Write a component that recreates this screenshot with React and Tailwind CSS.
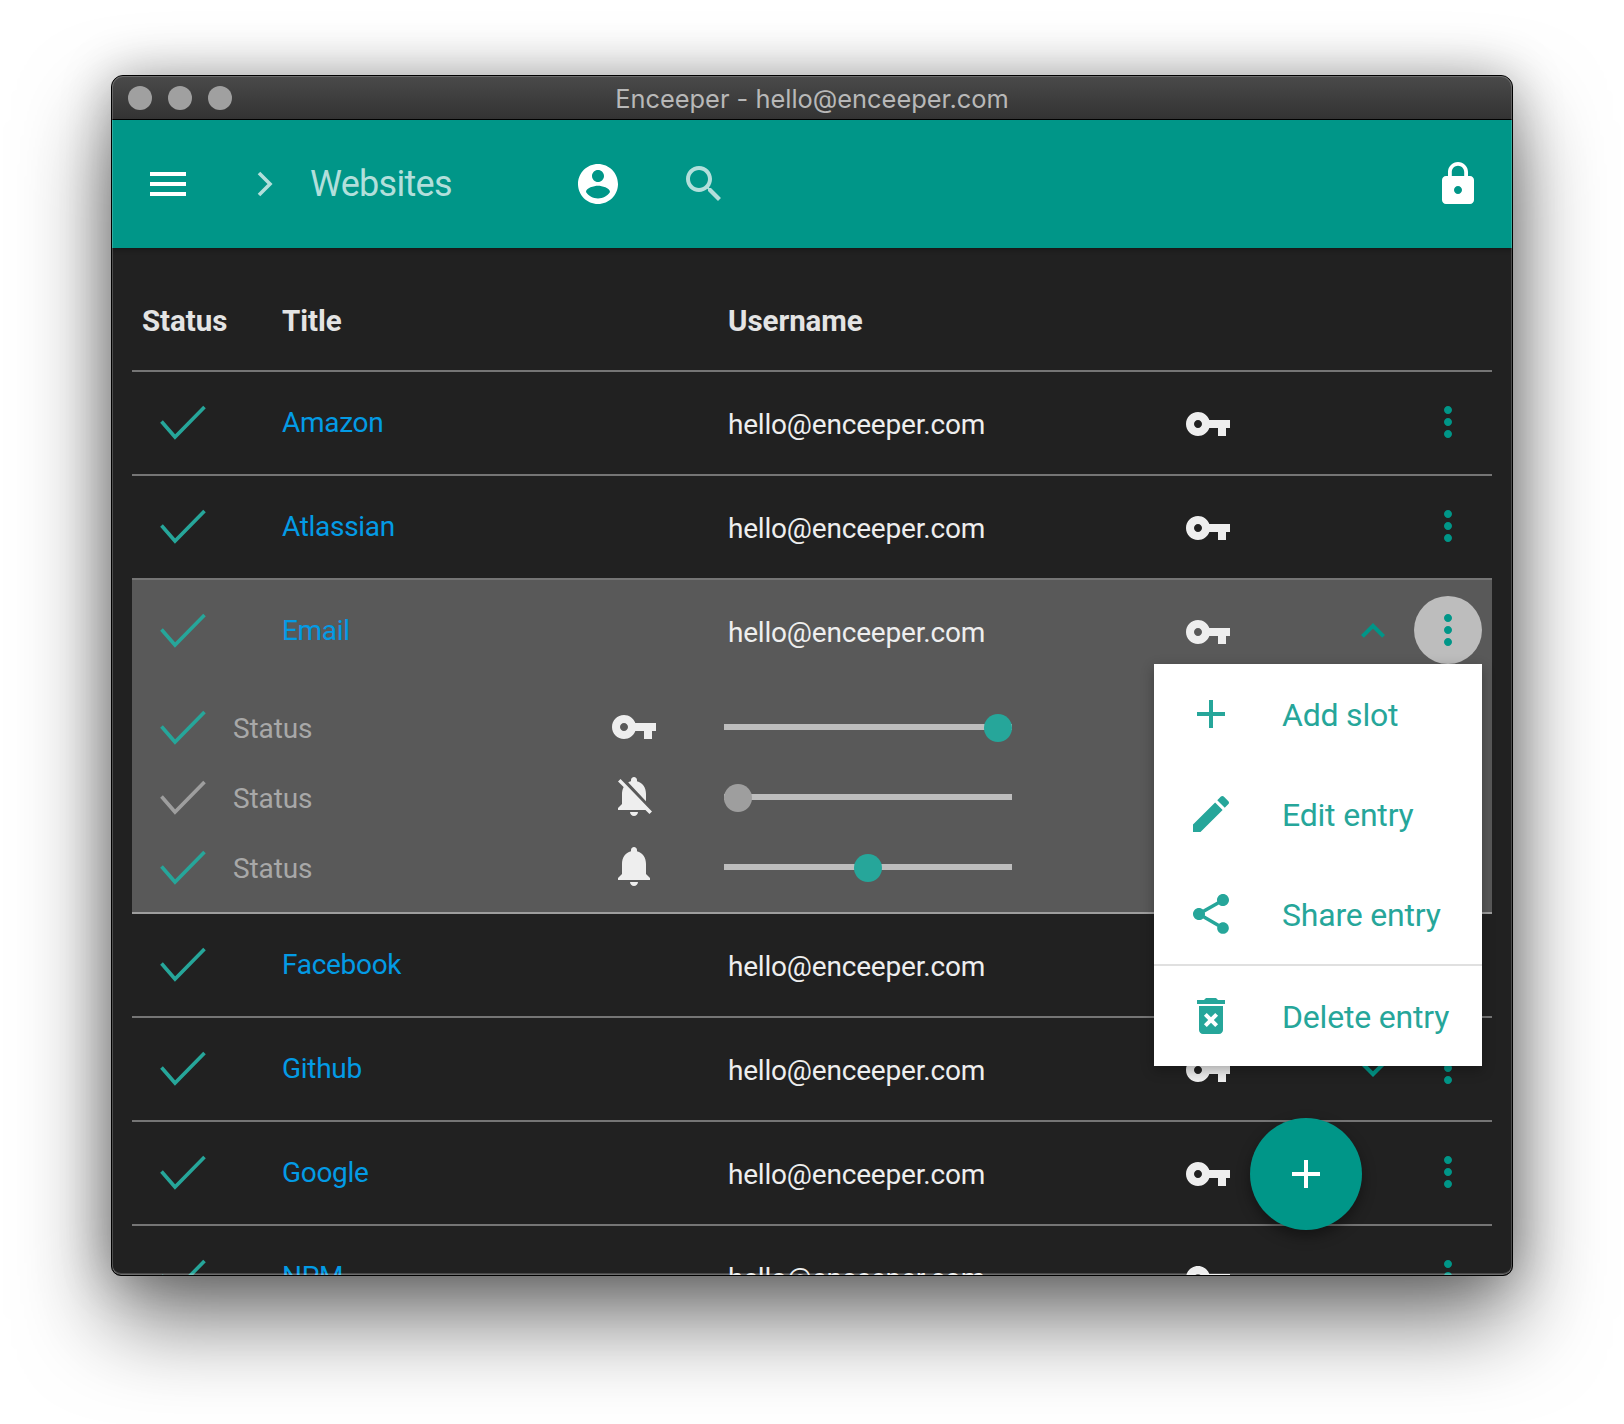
const paths = {
  menu: "M3 18h18v-2H3v2zm0-5h18v-2H3v2zm0-7v2h18V6H3z",
  account:
    "M12 2C6.48 2 2 6.48 2 12s4.48 10 10 10 10-4.48 10-10S17.52 2 12 2zm0 3c1.66 0 3 1.34 3 3s-1.34 3-3 3-3-1.34-3-3 1.34-3 3-3zm0 14.2c-2.5 0-4.71-1.28-6-3.22.03-1.99 4-3.08 6-3.08 1.99 0 5.97 1.09 6 3.08-1.29 1.94-3.5 3.22-6 3.22z",
  search:
    "M15.5 14h-.79l-.28-.27C15.41 12.59 16 11.11 16 9.5 16 5.91 13.09 3 9.5 3S3 5.91 3 9.5 5.91 16 9.5 16c1.61 0 3.09-.59 4.23-1.57l.27.28v.79l5 4.99L20.49 19l-4.99-5zm-6 0C7.01 14 5 11.99 5 9.5S7.01 5 9.5 5 14 7.01 14 9.5 11.99 14 9.5 14z",
  lock: "M18 8h-1V6c0-2.76-2.24-5-5-5S7 3.24 7 6v2H6c-1.1 0-2 .9-2 2v10c0 1.1.9 2 2 2h12c1.1 0 2-.9 2-2V10c0-1.1-.9-2-2-2zm-6 9c-1.1 0-2-.9-2-2s.9-2 2-2 2 .9 2 2-.9 2-2 2zm3.1-9H8.9V6c0-1.71 1.39-3.1 3.1-3.1 1.71 0 3.1 1.39 3.1 3.1v2z",
  key: "M12.65 10C11.83 7.67 9.61 6 7 6c-3.31 0-6 2.69-6 6s2.69 6 6 6c2.61 0 4.83-1.67 5.65-4H17v4h4v-4h2v-4H12.65zM7 14c-1.1 0-2-.9-2-2s.9-2 2-2 2 .9 2 2-.9 2-2 2z",
  bell: "M12 22c1.1 0 2-.9 2-2h-4c0 1.1.89 2 2 2zm6-6v-5c0-3.07-1.64-5.64-4.5-6.32V4c0-.83-.67-1.5-1.5-1.5s-1.5.67-1.5 1.5v.68C7.63 5.36 6 7.92 6 11v5l-2 2v1h16v-1l-2-2z",
  bellOff:
    "M20 18.69L7.84 6.14 5.27 3.49 4 4.76l2.8 2.8v.01c-.52.99-.8 2.16-.8 3.42v5l-2 2v1h13.73l2 2L21 19.72l-1-1.03zM12 22c1.11 0 2-.89 2-2h-4c0 1.11.89 2 2 2zm6-7.32V11c0-3.08-1.64-5.64-4.5-6.32V4c0-.83-.67-1.5-1.5-1.5s-1.5.67-1.5 1.5v.68c-.15.03-.29.08-.42.12-.1.03-.2.07-.3.11h-.01c-.2.08-.4.17-.59.27-.01 0-.01 0-.02.01L18 14.68z",
  edit: "M3 17.25V21h3.75L17.81 9.94l-3.75-3.75L3 17.25zM20.71 7.04c.39-.39.39-1.02 0-1.41l-2.34-2.34c-.39-.39-1.02-.39-1.41 0l-1.83 1.83 3.75 3.75 1.83-1.83z",
  share:
    "M18 16.08c-.76 0-1.44.3-1.96.77L8.91 12.7c.05-.23.09-.46.09-.7s-.04-.47-.09-.7l7.05-4.11c.54.5 1.25.81 2.04.81 1.66 0 3-1.34 3-3s-1.34-3-3-3-3 1.34-3 3c0 .24.04.47.09.7L8.04 9.81C7.5 9.31 6.79 9 6 9c-1.66 0-3 1.34-3 3s1.34 3 3 3c.79 0 1.5-.31 2.04-.81l7.12 4.16c-.05.21-.08.43-.08.65 0 1.61 1.31 2.92 2.92 2.92 1.61 0 2.92-1.31 2.92-2.92s-1.31-2.92-2.92-2.92z",
  trash:
    "M6 19c0 1.1.9 2 2 2h8c1.1 0 2-.9 2-2V7H6v12zm2.46-7.12l1.41-1.41L12 12.59l2.12-2.12 1.41 1.41L13.41 14l2.12 2.12-1.41 1.41L12 15.41l-2.12 2.12-1.41-1.41L10.59 14l-2.13-2.12zM15.5 4l-1-1h-5l-1 1H5v2h14V4z",
  add: "M19 13h-6v6h-2v-6H5v-2h6V5h2v6h6v2z",
  more: "M12 8c1.1 0 2-.9 2-2s-.9-2-2-2-2 .9-2 2 .9 2 2 2zm0 2c-1.1 0-2 .9-2 2s.9 2 2 2 2-.9 2-2-.9-2-2-2zm0 6c-1.1 0-2 .9-2 2s.9 2 2 2 2-.9 2-2-.9-2-2-2z",
  expandLess: "M12 8l-6 6 1.41 1.41L12 10.83l4.59 4.58L18 14z",
  expandMore: "M16.59 8.59L12 13.17 7.41 8.59 6 10l6 6 6-6z",
};

function Icon({ name, className = "" }) {
  return (
    <svg viewBox="0 0 24 24" fill="currentColor" className={"w-12 h-12 shrink-0 " + className}>
      <path d={paths[name]} />
    </svg>
  );
}

function Check({ className = "text-[#26a69a]" }) {
  return (
    <svg viewBox="0 0 48 36" fill="none" stroke="currentColor" strokeWidth="3.6" className={"w-12 h-9 shrink-0 " + className}>
      <path d="M2.5 16.5 L16 32 L45.5 2" />
    </svg>
  );
}

function Slider({ value, on }) {
  return (
    <div className="relative w-[288px] h-7 flex items-center">
      <div className="w-full h-[6px] -mt-[2px] bg-[#bdbdbd]" />
      <div
        className={"absolute top-0 w-7 h-7 rounded-full " + (on ? "bg-[#26a69a]" : "bg-[#9e9e9e]")}
        style={{ left: value * 260 }}
      />
    </div>
  );
}

function RowMain({ title, chevron, open }) {
  return (
    <div className="flex items-center h-[102px]">
      <div className="w-[151px] pl-[27px]">
        <Check />
      </div>
      <div className="w-[446px] -ml-px text-[28px] tracking-[-0.3px] text-[#039be5]">{title}</div>
      <div className="w-[456px] text-[28px] tracking-[-0.2px] text-[#eeeeee] mt-[3px]">hello@enceeper.com</div>
      <Icon name="key" className="text-[#eeeeee] mt-[2px]" />
      <div className="w-[117px]" />
      <div className="w-12 h-12">
        {chevron && <Icon name={open ? "expandLess" : "expandMore"} className="text-[#009688]" />}
      </div>
      <div className="w-[17px]" />
      <div className={"w-[68px] h-[68px] rounded-full flex items-center justify-center -mt-[2px] " + (open ? "bg-[#bdbdbd]" : "")}>
        <Icon name="more" className="text-[#009688]" />
      </div>
    </div>
  );
}

function SubRow({ icon, iconClass, value, on }) {
  return (
    <div className="flex items-center h-[70px]">
      <div className="w-[101px] pl-[27px]">
        <Check className={on ? "text-[#26a69a]" : "text-[#9e9e9e]"} />
      </div>
      <div className="w-[377px] text-[28px] tracking-[-0.1px] text-[#a8a8a8] mt-[2px]">Status</div>
      <Icon name={icon} className={"text-[#eeeeee] " + iconClass} />
      <div className="w-[66px]" />
      <Slider value={value} on={on} />
    </div>
  );
}

function MenuItem({ icon, label }) {
  return (
    <div className="flex items-center h-[100px] pl-[33px] text-[#26a69a]">
      <Icon name={icon} />
      <span className="ml-[47px] mt-[2px] text-[32px] tracking-[-0.2px]">{label}</span>
    </div>
  );
}

const rows = ["Amazon", "Atlassian", "Email", "Facebook", "Github", "Google", "NPM"];

export default function App() {
  return (
    <div className="w-[1624px] h-[1424px] bg-white pt-[75px] pl-[111px] overflow-hidden font-[Roboto,sans-serif]">
      <div className="relative w-[1402px] h-[1201px] rounded-t-[12px] rounded-b-[10px] overflow-hidden border border-black bg-[#212121] flex flex-col shadow-[0_44px_90px_rgba(0,0,0,0.55),0_0_50px_rgba(0,0,0,0.28)]">
        {/* title bar */}
        <div className="relative h-[44px] shrink-0 flex items-center pl-4 gap-4 bg-gradient-to-b from-[#4a4a4a] to-[#333333] border-b border-black">
          <div className="w-6 h-6 rounded-full bg-[#a0a0a0]" />
          <div className="w-6 h-6 rounded-full bg-[#a0a0a0]" />
          <div className="w-6 h-6 rounded-full bg-[#a0a0a0]" />
          <div className="absolute inset-x-0 pt-[3px] text-center text-[25.4px] text-[#b8b8b8] font-[Inter,sans-serif]">
            Enceeper - hello@enceeper.com
          </div>
        </div>

        {/* app bar */}
        <div className="relative z-10 h-[128px] shrink-0 bg-[#009688] flex items-center pl-[32px] pr-[30px] text-white shadow-[0_2px_4px_rgba(0,0,0,0.3)]">
          <Icon name="menu" />
          <svg viewBox="0 0 48 48" fill="none" stroke="#b2dfdb" strokeWidth="3.6" className="w-12 h-12 ml-[50px]">
            <path d="M17 13 L28 24 L17 35" />
          </svg>
          <span className="ml-[20px] text-[36px] tracking-[-0.7px] text-[#b2dfdb]">Websites</span>
          <Icon name="account" className="ml-[122px]" />
          <Icon name="search" className="ml-[58px] text-[#b2dfdb]" />
          <Icon name="lock" className="ml-auto" />
        </div>

        {/* table */}
        <div className="mx-[20px] flex-1">
          <div className="flex items-center h-[124px] pt-[24px] border-b-2 border-[#757575] text-[29.5px] tracking-[-0.05px] font-bold text-[#e4e4e4]">
            <div className="w-[151px] pl-[10px]">Status</div>
            <div className="w-[446px] -ml-px">Title</div>
            <div>Username</div>
          </div>

          {rows.map((title) =>
            title === "Email" ? (
              <div key={title} className="bg-[#595959] border-b-2 border-[#9e9e9e] h-[334px]">
                <RowMain title={title} chevron open />
                <div className="pt-[11px]">
                  <SubRow icon="key" iconClass="-mt-[2px]" value={1} on />
                  <SubRow icon="bellOff" iconClass="-mt-[4px]" value={0} />
                  <SubRow icon="bell" iconClass="-mt-[4px]" value={0.5} on />
                </div>
              </div>
            ) : (
              <div key={title} className="border-b-2 border-[#757575]">
                <RowMain title={title} chevron={title === "Github"} />
              </div>
            )
          )}
        </div>

        {/* row menu */}
        <div className="absolute left-[1042px] top-[588px] w-[328px] h-[402px] bg-white shadow-[0_4px_12px_rgba(0,0,0,0.3)]">
          <MenuItem icon="add" label="Add slot" />
          <MenuItem icon="edit" label="Edit entry" />
          <MenuItem icon="share" label="Share entry" />
          <div className="h-[2px] bg-[#e0e0e0]" />
          <MenuItem icon="trash" label="Delete entry" />
        </div>

        {/* add button */}
        <div className="absolute left-[1138px] top-[1042px] w-28 h-28 rounded-full bg-[#009688] text-white flex items-center justify-center shadow-[0_6px_14px_rgba(0,0,0,0.4)]">
          <Icon name="add" />
        </div>

        {/* window edge highlight */}
        <div className="absolute inset-0 z-20 pointer-events-none rounded-t-[11px] rounded-b-[9px] shadow-[inset_0_0_0_1px_rgba(255,255,255,0.2),inset_0_-2px_0_rgba(255,255,255,0.18)]" />
      </div>
    </div>
  );
}
